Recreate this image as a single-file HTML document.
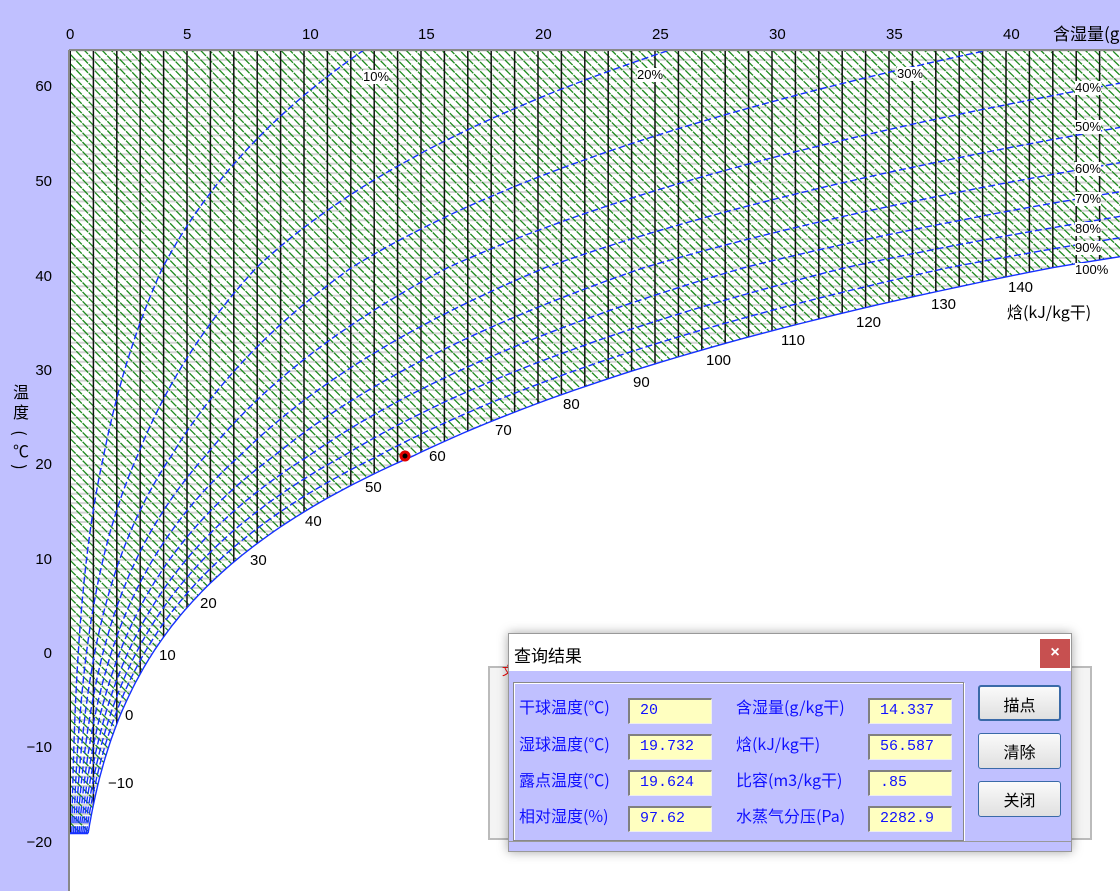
<!DOCTYPE html>
<html><head><meta charset="utf-8"><style>
html,body{margin:0;width:1120px;height:891px;overflow:hidden}
body{background:#c0c0ff;position:relative;font-family:"Liberation Sans","Noto Sans CJK SC",sans-serif}
.t{position:absolute;font-size:15px;color:#000;line-height:16px;white-space:nowrap}
.yl{position:absolute;font-size:15px;width:40px;text-align:right;left:12px;line-height:16px}
.rh{position:absolute;font-size:13px;background:#fff;line-height:14px;font-family:"Liberation Sans",sans-serif}
#dlg{position:absolute;left:508px;top:633px;width:564px;height:219px;background:#c0c0ff;box-shadow:0 0 10px rgba(0,0,0,.35);border:1px solid #999;box-sizing:border-box}
#tb{position:absolute;left:0;top:0;width:562px;height:37px;background:#fff}
#tb span{position:absolute;left:5px;top:8px;font-size:17px;font-family:"Noto Sans CJK SC",sans-serif}
#cls{position:absolute;left:531px;top:5px;width:30px;height:29px;background:#c75050;color:#fff;font-size:16px;text-align:center;line-height:28px;font-weight:bold}
.lb{position:absolute;color:#1010ff;font-size:16px;font-family:"Noto Sans CJK SC",sans-serif;line-height:20px}
.in{position:absolute;background:#ffffc0;border-top:2px solid #808080;border-left:2px solid #808080;border-right:1px solid #eee;border-bottom:1px solid #eee;color:#1010ff;font-size:15px;line-height:22px;padding-left:10px;box-sizing:border-box;width:84px;height:26px;font-family:"Liberation Mono",monospace}
.bt{position:absolute;left:469px;width:83px;height:36px;border:1px solid #3a6aa8;border-radius:3px;background:linear-gradient(#fafafa,#e0e0e0);font-size:16px;text-align:center;line-height:34px;box-sizing:border-box;font-family:"Noto Sans CJK SC",sans-serif}
.vc{position:absolute;left:12px;width:18px;text-align:center;font-size:16px;line-height:18px;font-family:"Noto Sans CJK SC",sans-serif}
</style></head><body>
<svg id="s" width="1120" height="891" style="position:absolute;left:0;top:0">
<rect x="69" y="50" width="1051" height="841" fill="#fff"/>
<defs><clipPath id="cp"><polygon id="cpp" points=""/></clipPath><clipPath id="cr"><rect x="70" y="51" width="1050" height="840"/></clipPath></defs>
<g id="g1" clip-path="url(#cp)"></g>
<g id="g2" clip-path="url(#cr)"></g>
<line x1="69" y1="50" x2="1120" y2="50" stroke="#888" stroke-width="2"/>
<line x1="69" y1="50" x2="69" y2="891" stroke="#888" stroke-width="2"/>
<circle cx="405" cy="456" r="5.5" fill="#e00000"/><circle cx="405" cy="456" r="2.5" fill="#000"/>
</svg>
<div class="t" style="left:66px;top:27px">0</div>
<div class="t" style="left:183px;top:27px">5</div>
<div class="t" style="left:302px;top:27px">10</div>
<div class="t" style="left:418px;top:27px">15</div>
<div class="t" style="left:535px;top:27px">20</div>
<div class="t" style="left:652px;top:27px">25</div>
<div class="t" style="left:769px;top:27px">30</div>
<div class="t" style="left:886px;top:27px">35</div>
<div class="t" style="left:1003px;top:27px">40</div>
<div class="t" style="left:1053px;top:25px;font-size:17px;font-family:'Noto Sans CJK SC',sans-serif">含湿量(g</div>
<div class="yl" style="top:79px">60</div><div class="yl" style="top:174px">50</div><div class="yl" style="top:269px">40</div><div class="yl" style="top:363px">30</div><div class="yl" style="top:457px">20</div><div class="yl" style="top:552px">10</div><div class="yl" style="top:646px">0</div><div class="yl" style="top:740px">−10</div><div class="yl" style="top:835px">−20</div>
<div class="vc" style="top:382px">温</div>
<div class="vc" style="top:402px">度</div>
<div class="vc" style="top:424px;transform:rotate(90deg)">(</div>
<div class="vc" style="top:441px">℃</div>
<div class="vc" style="top:458px;transform:rotate(90deg)">)</div>
<div class="rh" style="left:363px;top:70px">10%</div>
<div class="rh" style="left:637px;top:68px">20%</div>
<div class="rh" style="left:897px;top:67px">30%</div>
<div class="rh" style="left:1075px;top:81px">40%</div>
<div class="rh" style="left:1075px;top:120px">50%</div>
<div class="rh" style="left:1075px;top:162px">60%</div>
<div class="rh" style="left:1075px;top:192px">70%</div>
<div class="rh" style="left:1075px;top:222px">80%</div>
<div class="rh" style="left:1075px;top:241px">90%</div>
<div class="rh" style="left:1075px;top:263px">100%</div>
<div class="t" style="left:108px;top:776px">−10</div>
<div class="t" style="left:125px;top:708px">0</div>
<div class="t" style="left:159px;top:648px">10</div>
<div class="t" style="left:200px;top:596px">20</div>
<div class="t" style="left:250px;top:553px">30</div>
<div class="t" style="left:305px;top:514px">40</div>
<div class="t" style="left:365px;top:480px">50</div>
<div class="t" style="left:429px;top:449px">60</div>
<div class="t" style="left:495px;top:423px">70</div>
<div class="t" style="left:563px;top:397px">80</div>
<div class="t" style="left:633px;top:375px">90</div>
<div class="t" style="left:706px;top:353px">100</div>
<div class="t" style="left:781px;top:333px">110</div>
<div class="t" style="left:856px;top:315px">120</div>
<div class="t" style="left:931px;top:297px">130</div>
<div class="t" style="left:1008px;top:280px">140</div>
<div class="t" style="left:1007px;top:303px;font-size:16px;font-family:'Noto Sans CJK SC',sans-serif">焓(kJ/kg干)</div>
<div style="position:absolute;left:488px;top:666px;width:600px;height:170px;border:2px solid #bbb;background:#f4f4f4"></div>
<div style="position:absolute;left:502px;top:662px;color:#e00;font-size:12px">文</div>
<div id="dlg">
<div id="tb"><span>查询结果</span><div id="cls">×</div></div>
<div style="position:absolute;left:4px;top:48px;width:449px;height:157px;border:1px solid #888;box-shadow:inset 1px 1px 0 #fff,1px 1px 0 #fff"></div>
<div class="lb" style="left:10px;top:62px">干球温度(℃)</div><div class="in" style="left:119px;top:64px">20</div>
<div class="lb" style="left:10px;top:99px">湿球温度(℃)</div><div class="in" style="left:119px;top:100px">19.732</div>
<div class="lb" style="left:10px;top:135px">露点温度(℃)</div><div class="in" style="left:119px;top:136px">19.624</div>
<div class="lb" style="left:10px;top:171px">相对湿度(%)</div><div class="in" style="left:119px;top:172px">97.62</div>
<div class="lb" style="left:227px;top:62px">含湿量(g/kg干)</div><div class="in" style="left:359px;top:64px">14.337</div>
<div class="lb" style="left:227px;top:99px">焓(kJ/kg干)</div><div class="in" style="left:359px;top:100px">56.587</div>
<div class="lb" style="left:227px;top:135px">比容(m3/kg干)</div><div class="in" style="left:359px;top:136px">.85</div>
<div class="lb" style="left:227px;top:171px">水蒸气分压(Pa)</div><div class="in" style="left:359px;top:172px">2282.9</div>
<div class="bt" style="top:51px;border-width:2px">描点</div>
<div class="bt" style="top:99px">清除</div>
<div class="bt" style="top:147px">关闭</div>
<div style="position:absolute;left:0;top:207px;width:562px;height:1px;background:#999"></div>
</div>
<script>
var X=d=>70+23.4*d, Y=T=>456-(T-20)*9.43;
function r(T){return T<=20?1:(T>=40?0.87:1-0.13*(T-20)/20);}
function ps(T){return 610.94*Math.exp(17.625*T/(T+243.04))*r(T);}
function dd(T,p){var pw=p*ps(T);return 622*pw/(101325-pw);}
var NS="http://www.w3.org/2000/svg",g1=document.getElementById('g1'),g2=document.getElementById('g2');
function pl(g,pts,st,w,da){var e=document.createElementNS(NS,'polyline');e.setAttribute('points',pts.map(p=>p[0].toFixed(1)+','+p[1].toFixed(1)).join(' '));e.setAttribute('fill','none');e.setAttribute('stroke',st);e.setAttribute('stroke-width',w);if(da)e.setAttribute('stroke-dasharray',da);g.appendChild(e);}
var sat=[];for(var T=-20;T<=64;T+=0.25){var x=X(dd(T,1));sat.push([x,Y(T)]);if(x>1125)break;}
var poly=[[69,50],[1125,50]];for(var i=sat.length-1;i>=0;i--)poly.push(sat[i]);poly.push([69,Y(-20)]);
document.getElementById('cpp').setAttribute('points',poly.map(p=>p[0].toFixed(1)+','+p[1].toFixed(1)).join(' '));
for(var T=-20;T<=64;T++)pl(g1,[[69,Y(T)],[1120,Y(T)]],'#d4d4d4',2);
for(var h=-25;h<=260;h++){var pts=[];for(var d=0;d<=48;d+=1){var T=(h-2.501*d)/(1.006+0.00186*d);pts.push([X(d),Y(T)]);}pl(g1,pts,'#1f8a1f',1.3,'8 1');}
for(var d=1;d<=45;d++)pl(g1,[[X(d),50],[X(d),900]],'#111',1.5);
pl(g1,[[70,50],[70,900]],'#111',2);
for(var k=1;k<=10;k++){var p=k/10,pts=[];for(var T=-20;T<=64;T+=0.5)pts.push([X(dd(T,p)),Y(T)]);pl(g2,pts,'#1530ff',1.4,k==10?null:'7 3');}
pl(g2,[[70,Y(-20)],[X(dd(-20,1)),Y(-20)]],'#1530ff',2);
</script>
</body></html>
